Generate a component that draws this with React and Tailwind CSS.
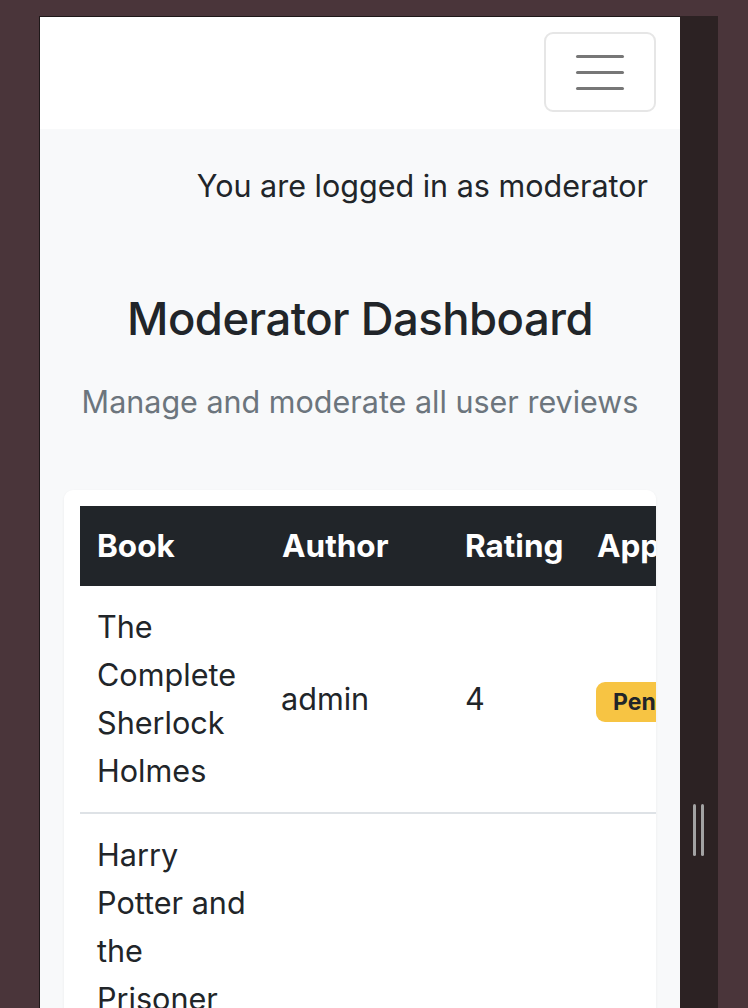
export default function App() {
  const font = { fontFamily: 'Inter, "Noto Sans", sans-serif' };
  return (
    <div className="w-[748px] h-[1008px] bg-[#4a353a] overflow-hidden relative" style={font}>
      <div className="flex h-full pt-[16px]">
        <div className="w-[39px] shrink-0" />
        <div className="w-[641px] shrink-0 h-[992px] border-l border-t border-[#1e1819] bg-[#f8f9fa] overflow-hidden">
          <div className="h-[112px] bg-white flex justify-end items-start pt-[15px] pr-[24px]">
            <button className="w-[112px] h-[80px] rounded-[9px] border-2 border-[#e6e6e6] flex flex-col items-center justify-center gap-[13px]">
              <span className="block w-[48px] h-[3px] rounded-full bg-[#777777]" />
              <span className="block w-[48px] h-[3px] rounded-full bg-[#777777]" />
              <span className="block w-[48px] h-[3px] rounded-full bg-[#777777]" />
            </button>
          </div>
          <div className="px-[24px] text-[#212529]">
            <p className="text-right text-[30.5px] leading-[48px] mt-[33px] pr-[8px]">You are logged in as moderator</p>
            <h2 className="text-center text-[45.4px] font-medium leading-[56px] mt-[81px] tracking-[-0.5px]">Moderator Dashboard</h2>
            <p className="text-center text-[30.5px] leading-[48px] text-[#6c757d] mt-[31px]">Manage and moderate all user reviews</p>
          </div>
          <div className="mx-[24px] mt-[64px] bg-white rounded-[9px] shadow-[0_1px_3px_rgba(0,0,0,0.06)] pl-[16px] pt-[16px] overflow-hidden h-[600px]">
            <table className="border-collapse text-[30.6px] leading-[48px] text-[#212529] table-fixed w-[700px]">
              <colgroup>
                <col className="w-[185px]" />
                <col className="w-[183px]" />
                <col className="w-[132px]" />
                <col className="w-[200px]" />
              </colgroup>
              <thead>
                <tr className="bg-[#212529] text-white">
                  <th className="text-left h-[80px] px-[17px] align-middle font-bold text-[31.5px]">Book</th>
                  <th className="text-left px-[17px] align-middle font-bold text-[31.5px]">Author</th>
                  <th className="text-left px-[17px] align-middle font-bold text-[31.5px]">Rating</th>
                  <th className="text-left px-[17px] align-middle font-bold text-[31.5px] whitespace-nowrap">Approval</th>
                </tr>
              </thead>
              <tbody>
                <tr className="border-b-2 border-[#dee2e6]">
                  <td className="px-[17px] py-[17px] align-middle">The Complete Sherlock Holmes</td>
                  <td className="px-[16px] align-middle">admin</td>
                  <td className="px-[17px] align-middle">4</td>
                  <td className="px-[16px] align-middle">
                    <span className="inline-block bg-[#f7c443] text-[#212529] font-bold text-[23px] leading-[40px] px-[17px] rounded-[9px]">Pending</span>
                  </td>
                </tr>
                <tr>
                  <td className="px-[17px] py-[17px] align-top">Harry Potter and the Prisoner of Azkaban</td>
                  <td className="px-[16px]"></td>
                  <td className="px-[17px]"></td>
                  <td className="px-[16px]"></td>
                </tr>
              </tbody>
            </table>
          </div>
        </div>
        <div className="w-[38px] shrink-0 bg-[#2c2223] relative">
          <div className="absolute left-[13px] top-[788px] w-[3px] h-[52px] rounded-full bg-[#a3a3a3]" />
          <div className="absolute left-[21px] top-[788px] w-[3px] h-[52px] rounded-full bg-[#a3a3a3]" />
        </div>
      </div>
    </div>
  );
}
